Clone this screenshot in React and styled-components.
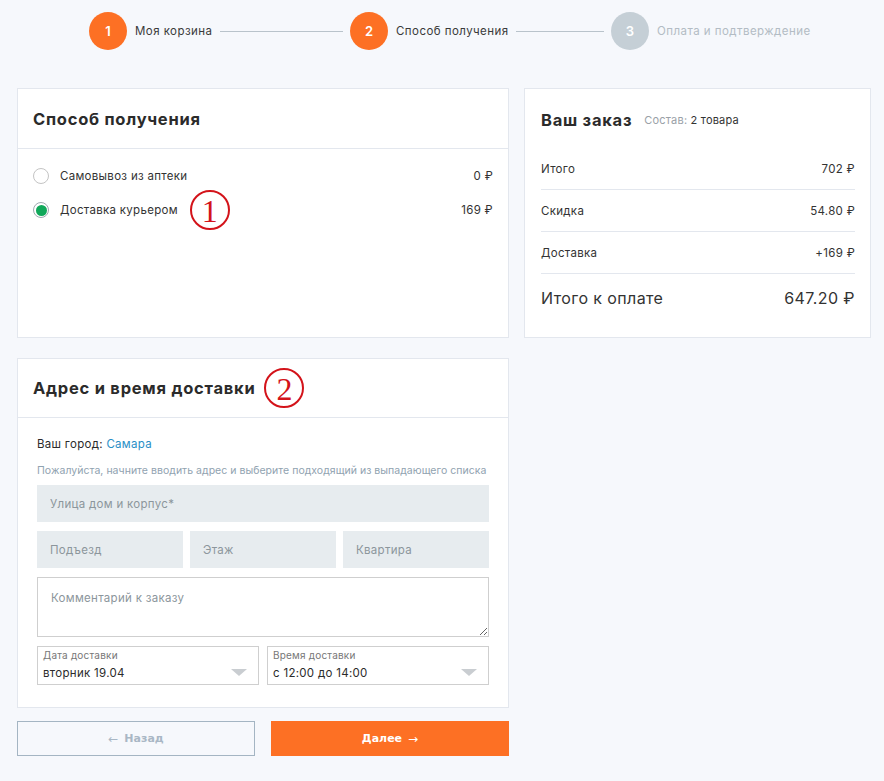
import React from "react";
import styled, { createGlobalStyle } from "styled-components";

const Global = createGlobalStyle`
  html, body { margin: 0; padding: 0; background: #f6f8fc; }
  body { font-family: "Inter", "Open Sans", sans-serif; color: #2f2f2f; }
  * { box-sizing: border-box; }
`;

const Page = styled.div`
  width: 884px;
  min-height: 781px;
  padding: 0 13px 20px 17px;
`;

const Stepper = styled.div`
  height: 62px;
  display: flex;
  align-items: center;
  padding-left: 72px;
  margin-bottom: 26px;
`;

const Step = styled.div`
  display: flex;
  align-items: center;
  width: 261px;
  flex: none;
`;

const StepCircle = styled.div`
  width: 38px;
  height: 38px;
  border-radius: 50%;
  background: ${(p) => (p.$active ? "#fd7024" : "#c5cfd6")};
  color: #fff;
  font-size: 13px;
  font-weight: 600;
  display: flex;
  align-items: center;
  justify-content: center;
  flex: none;
`;

const StepLabel = styled.span`
  margin-left: 8px;
  font-size: 11.5px;
  letter-spacing: 0.45px;
  color: ${(p) => (p.$active ? "#3a3a3a" : "#b3bcc4")};
  white-space: nowrap;
`;

const StepLine = styled.div`
  flex: 1;
  height: 1px;
  background: #b9c3cb;
  margin: 0 7px;
`;

const Grid = styled.div`
  display: grid;
  grid-template-columns: 492px 347px;
  column-gap: 15px;
  row-gap: 20px;
  align-items: start;
`;

const Card = styled.div`
  background: #fff;
  border: 1px solid #e3e7ee;
  height: ${(p) => p.$h}px;
  display: flex;
  flex-direction: column;
`;

const CardHead = styled.div`
  height: ${(p) => p.$h}px;
  border-bottom: 1px solid #e3e7ee;
  display: flex;
  align-items: center;
  padding: 0 15px;
  flex: none;
`;

const Title = styled.h2`
  margin: 0;
  font-size: 16.5px;
  font-weight: 700;
  color: #2b2b2b;
  letter-spacing: 0.75px;
`;

const Mark = styled.span`
  width: 40px;
  height: 40px;
  border-radius: 50%;
  border: 2px solid #d3131a;
  color: #d3131a;
  font-family: "Liberation Serif", serif;
  font-size: 32px;
  line-height: 1;
  display: inline-flex;
  align-items: center;
  justify-content: center;
  margin-left: ${(p) => p.$ml}px;
  padding-top: 2px;
  flex: none;
`;

const MethodBody = styled.div`
  padding: 19px 15px;
  display: flex;
  flex-direction: column;
  gap: 18px;
`;

const MethodRow = styled.label`
  height: 16px;
  display: flex;
  align-items: center;
  font-size: 11.5px;
  letter-spacing: 0.3px;
  color: #333;
`;

const Radio = styled.span`
  width: 16px;
  height: 16px;
  border-radius: 50%;
  border: 1px solid ${(p) => (p.$on ? "#9fa9b0" : "#c4c4c4")};
  background: #fff;
  display: inline-flex;
  align-items: center;
  justify-content: center;
  margin-right: 11px;
  flex: none;
  &::after {
    content: "";
    width: 11px;
    height: 11px;
    border-radius: 50%;
    background: ${(p) => (p.$on ? "#11a85a" : "transparent")};
  }
`;

const Price = styled.span`
  margin-left: auto;
  font-size: 11.5px;
  color: #333;
`;

const FormBody = styled.div`
  padding: 19px 19px 24px;
  display: flex;
  flex-direction: column;
`;

const City = styled.div`
  font-size: 11.5px;
  letter-spacing: 0.3px;
  color: #2b2b2b;
  line-height: 14px;
  a { color: #2a8fc6; text-decoration: none; }
`;

const Hint = styled.div`
  margin-top: 13px;
  font-size: 10.5px;
  line-height: 14px;
  color: #90a2b0;
  letter-spacing: 0.03px;
  white-space: nowrap;
`;

const Input = styled.input`
  height: 37px;
  width: 100%;
  border: none;
  background: #e7ecef;
  padding: 0 13px;
  font-family: inherit;
  font-size: 11.5px;
  letter-spacing: 0.3px;
  color: #333;
  outline: none;
  &::placeholder { color: #8c969c; }
`;

const FirstInput = styled(Input)`
  margin-top: 7px;
`;

const Row3 = styled.div`
  margin-top: 9px;
  display: grid;
  grid-template-columns: repeat(3, 1fr);
  gap: 7px;
`;

const TextArea = styled.textarea`
  margin-top: 9px;
  height: 60px;
  width: 100%;
  border: 1px solid #cfcfcf;
  background: #fff;
  padding: 13px 13px;
  font-family: inherit;
  font-size: 11.5px;
  letter-spacing: 0.3px;
  resize: vertical;
  outline: none;
  &::placeholder { color: #8c969c; }
`;

const Row2 = styled.div`
  margin-top: 9px;
  display: grid;
  grid-template-columns: 1fr 1fr;
  gap: 8px;
`;

const Select = styled.div`
  height: 39px;
  border: 1px solid #cfcfcf;
  background: #fff;
  padding: 2px 5px 0;
  position: relative;
`;

const SelLabel = styled.div`
  font-size: 10px;
  letter-spacing: 0.2px;
  color: #777;
  line-height: 13px;
`;

const SelValue = styled.div`
  font-size: 11.5px;
  letter-spacing: 0.3px;
  color: #2b2b2b;
  line-height: 16px;
  margin-top: 3px;
`;

const Arrow = styled.span`
  position: absolute;
  right: 11px;
  top: 22px;
  width: 0;
  height: 0;
  border-left: 8px solid transparent;
  border-right: 8px solid transparent;
  border-top: 7px solid #c9cdd1;
`;

const Buttons = styled.div`
  grid-column: 1;
  margin-top: -7px;
  display: grid;
  grid-template-columns: 238px 238px;
  gap: 16px;
`;

const Btn = styled.button`
  height: 35px;
  border: 1px solid ${(p) => (p.$primary ? "#fd7024" : "#a4b5c3")};
  background: ${(p) => (p.$primary ? "#fd7024" : "transparent")};
  color: ${(p) => (p.$primary ? "#fff" : "#a9b7c5")};
  font-family: "DejaVu Sans", sans-serif;
  font-weight: 700;
  font-size: 11px;
  display: flex;
  align-items: center;
  justify-content: center;
  gap: 6px;
  cursor: pointer;
`;

const BtnArrow = styled.span`
  font-weight: 400;
  font-size: 12px;
`;

const SumCard = styled.div`
  background: #fff;
  border: 1px solid #e3e7ee;
  height: 250px;
  padding: 0 15px 0 16px;
  display: flex;
  flex-direction: column;
`;

const SumHead = styled.div`
  height: 59px;
  display: flex;
  align-items: center;
  gap: 12px;
  padding-top: 2px;
`;

const SumTitle = styled.h2`
  margin: 0;
  font-size: 16.5px;
  font-weight: 700;
  letter-spacing: 0.75px;
  color: #2b2b2b;
`;

const Sub = styled.span`
  font-size: 11px;
  letter-spacing: 0.2px;
  color: #9aa1a7;
  b { font-weight: 400; color: #333; }
`;

const SumRow = styled.div`
  height: ${(p) => (p.$total ? 47 : 42)}px;
  display: flex;
  align-items: center;
  justify-content: space-between;
  border-bottom: ${(p) => (p.$total ? "none" : "1px solid #e3e7ee")};
  font-size: ${(p) => (p.$total ? "16px" : "11.5px")};
  letter-spacing: ${(p) => (p.$total ? "0.4px" : "0.3px")};
  color: #333;
  padding-top: ${(p) => (p.$first ? 0 : 1)}px;
`;

const steps = [
  { n: 1, label: "Моя корзина", active: true },
  { n: 2, label: "Способ получения", active: true },
  { n: 3, label: "Оплата и подтверждение", active: false },
];

export default function App() {
  return (
    <Page>
      <Global />
      <Stepper>
        {steps.map((s, i) => (
          <Step key={s.n}>
            <StepCircle $active={s.active}>{s.n}</StepCircle>
            <StepLabel $active={s.active}>{s.label}</StepLabel>
            {i < steps.length - 1 && <StepLine />}
          </Step>
        ))}
      </Stepper>
      <Grid>
        <Card $h={250}>
          <CardHead $h={60}>
            <Title>Способ получения</Title>
          </CardHead>
          <MethodBody>
            <MethodRow>
              <Radio />
              Самовывоз из аптеки
              <Price>0 ₽</Price>
            </MethodRow>
            <MethodRow>
              <Radio $on />
              Доставка курьером
              <Mark $ml={12}>1</Mark>
              <Price>169 ₽</Price>
            </MethodRow>
          </MethodBody>
        </Card>

        <SumCard>
          <SumHead>
            <SumTitle>Ваш заказ</SumTitle>
            <Sub>
              Состав: <b>2 товара</b>
            </Sub>
          </SumHead>
          <SumRow $first>
            <span>Итого</span>
            <span>702 ₽</span>
          </SumRow>
          <SumRow>
            <span>Скидка</span>
            <span>54.80 ₽</span>
          </SumRow>
          <SumRow>
            <span>Доставка</span>
            <span>+169 ₽</span>
          </SumRow>
          <SumRow $total>
            <span>Итого к оплате</span>
            <span>647.20 ₽</span>
          </SumRow>
        </SumCard>

        <Card $h={350}>
          <CardHead $h={59}>
            <Title>Адрес и время доставки</Title>
            <Mark $ml={9}>2</Mark>
          </CardHead>
          <FormBody>
            <City>
              Ваш город: <a href="#">Самара</a>
            </City>
            <Hint>
              Пожалуйста, начните вводить адрес и выберите подходящий из выпадающего списка
            </Hint>
            <FirstInput placeholder="Улица дом и корпус*" />
            <Row3>
              <Input placeholder="Подъезд" />
              <Input placeholder="Этаж" />
              <Input placeholder="Квартира" />
            </Row3>
            <TextArea placeholder="Комментарий к заказу" />
            <Row2>
              <Select>
                <SelLabel>Дата доставки</SelLabel>
                <SelValue>вторник 19.04</SelValue>
                <Arrow />
              </Select>
              <Select>
                <SelLabel>Время доставки</SelLabel>
                <SelValue>с 12:00 до 14:00</SelValue>
                <Arrow />
              </Select>
            </Row2>
          </FormBody>
        </Card>
        <div />
        <Buttons>
          <Btn>
            <BtnArrow>←</BtnArrow>Назад
          </Btn>
          <Btn $primary>
            Далее<BtnArrow>→</BtnArrow>
          </Btn>
        </Buttons>
      </Grid>
    </Page>
  );
}
